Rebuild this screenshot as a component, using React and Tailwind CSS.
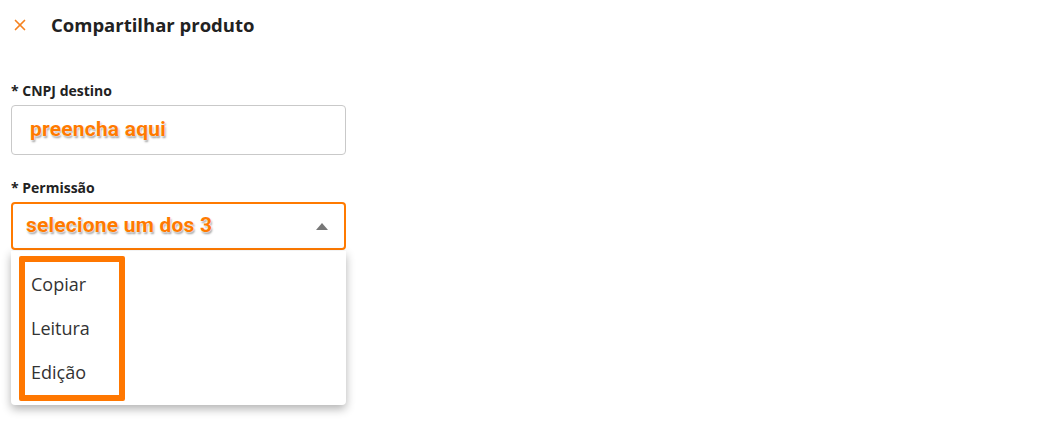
import { X } from 'lucide-react';

export default function App() {
  const options = ['Copiar', 'Leitura', 'Edição'];
  const filled =
    "font-['Roboto',sans-serif] text-[21px] font-bold tracking-[0.2px] text-[#ff7a00] [text-shadow:0_0_2px_#fff,0_0_2px_#fff,1px_2px_2px_#9a9a9a]";

  return (
    <div className="h-[434px] w-[1058px] bg-white font-['Open_Sans',sans-serif] text-[#222]">
      <header className="flex h-[50px] items-center pl-[11px]">
        <X className="h-[18px] w-[18px] text-[#f58220]" strokeWidth={2.25} />
        <h1 className="ml-[22px] text-[18.5px] font-bold tracking-[0px] text-[#222]">Compartilhar produto</h1>
      </header>

      <div className="w-[346px] pl-[11px] pt-[33px]">
        <label className="block text-[14px] font-bold leading-[16px] text-[#222]">* CNPJ destino</label>
        <div className="mt-[6px] flex h-[50px] items-center rounded-[4px] border border-[#c9c9c9] pl-[18px]">
          <span className={filled}>preencha aqui</span>
        </div>

        <label className="mt-[25px] block text-[14px] font-bold leading-[16px] text-[#222]">* Permissão</label>
        <div className="relative mt-[6px]">
          <div className="flex h-[48px] items-center justify-between rounded-[4px] border-2 border-[#ff7a00] pl-[13px] pr-[16px]">
            <span className={filled}>selecione um dos 3</span>
            <span className="h-0 w-0 border-x-[6px] border-b-[7px] border-x-transparent border-b-[#777]" />
          </div>

          <div className="absolute left-0 top-[49px] h-[154px] w-[335px] rounded-b-[4px] bg-white pl-[8px] pt-[5px] shadow-[0_4px_10px_rgba(0,0,0,0.3)]">
            <div className="flex h-[145px] w-[106px] flex-col rounded-[2px] border-[6px] border-[#ff7700] pl-[6px]">
              {options.map((opt) => (
                <div key={opt} className="flex h-[45px] items-center text-[18px] text-[#333]">
                  {opt}
                </div>
              ))}
            </div>
          </div>
        </div>
      </div>
    </div>
  );
}
